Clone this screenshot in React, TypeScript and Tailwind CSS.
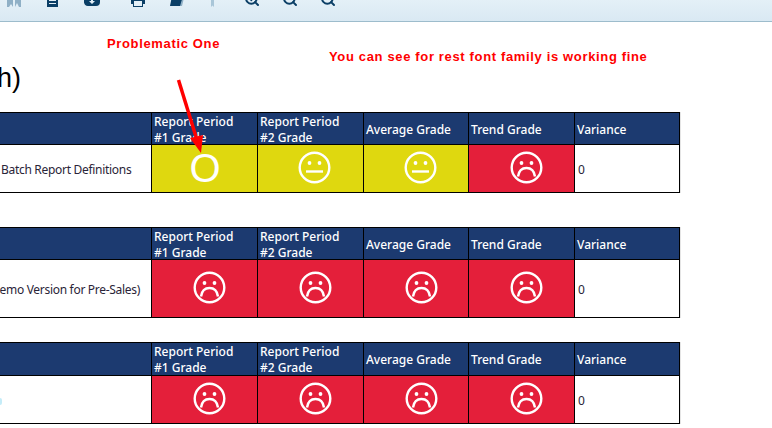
import { Search, ZoomIn, ZoomOut } from "lucide-react";

const columns = ["Report Period #1 Grade", "Report Period #2 Grade", "Average Grade", "Trend Grade", "Variance"];

type Grade = "sad" | "neutral" | "broken";

const tables: {
  name: string;
  nameClass: string;
  grades: Grade[];
  bodyHeight: string;
  headHeight: string;
  margin: string;
  dot?: boolean;
}[] = [
  {
    name: "Batch Report Definitions",
    nameClass: "justify-start pl-[1px]",
    grades: ["broken", "neutral", "neutral", "sad"],
    bodyHeight: "h-[48px]",
    headHeight: "h-[32px]",
    margin: "mt-0",
  },
  {
    name: "(Demo Version for Pre-Sales)",
    nameClass: "justify-end pr-[11px]",
    grades: ["sad", "sad", "sad", "sad"],
    bodyHeight: "h-[58px]",
    headHeight: "h-[32px]",
    margin: "mt-[34px]",
  },
  {
    name: "",
    nameClass: "justify-start",
    grades: ["sad", "sad", "sad", "sad"],
    bodyHeight: "h-[48px]",
    headHeight: "h-[33px]",
    margin: "mt-[24px]",
    dot: true,
  },
];

function Face({ mood }: { mood: "sad" | "neutral" }) {
  return (
    <svg width="33" height="33" viewBox="0 0 33 33" fill="none" stroke="white" strokeWidth="2.4">
      <circle cx="16.5" cy="16.5" r="14.8" />
      <circle cx="11.5" cy="12" r="1.9" fill="white" stroke="none" />
      <circle cx="21.5" cy="12" r="1.9" fill="white" stroke="none" />
      {mood === "sad" ? (
        <path d="M8 25.500c.8-5.500 4.200-8.500 8.500-8.500s7.700 3 8.500 8.500" />
      ) : (
        <path d="M8 20.500h17" />
      )}
    </svg>
  );
}

function GradeCell({ grade }: { grade: Grade }) {
  if (grade === "broken") {
    return (
      <div className="flex items-center justify-center border-l border-black bg-[#dfd80f] pb-[2px] pl-[1px] font-['Liberation_Sans',sans-serif] text-[40px] leading-none text-white">
        O
      </div>
    );
  }

  return (
    <div
      className={`flex items-center justify-center border-l border-black pb-[3px] ${
        grade === "sad" ? "bg-[#e41f3a] pl-[10px]" : "bg-[#dfd80f] pl-[8px]"
      }`}
    >
      <Face mood={grade} />
    </div>
  );
}

function Toolbar() {
  return (
    <div className="flex h-[22px] items-start overflow-hidden border-b border-[#9dbccc] bg-gradient-to-b from-[#e4f0f7] to-[#d9e9f3] text-[#0b3f66]">
      <svg className="-mt-[9px] ml-[6px] shrink-0 text-[#8fb0c6]" width="16" height="16" viewBox="0 0 16 16" fill="currentColor">
        <path d="M1 0h6v16l-2-3-2 3H1zM9 0h6v16h-2l-2-4-2 4z" />
      </svg>
      <svg className="-mt-[9px] ml-[23px] shrink-0" width="16" height="16" viewBox="0 0 16 16" fill="currentColor">
        <path d="M2 0h11v16H2z" />
        <path d="M4 9h7v1H4zM4 12h7v1H4z" fill="#e4f0f7" />
      </svg>
      <svg className="-mt-[9px] ml-[23px] shrink-0" width="16" height="16" viewBox="0 0 16 16" fill="currentColor">
        <path d="M4 6h8a4 4 0 0 1 4 5 4 4 0 0 1-4 4H4a4 4 0 0 1-4-4.500A4 4 0 0 1 4 6z" />
        <path d="M7 8h2v2h2l-3 3-3-3h2z" fill="#e4f0f7" />
      </svg>
      <svg className="-mt-[9px] ml-[30px] shrink-0" width="16" height="16" viewBox="0 0 16 16" fill="currentColor">
        <path d="M3 4h10v4h2v5h-2v3H3v-3H1V8h2z" />
        <path d="M4 10h8v5H4z" fill="#e4f0f7" />
      </svg>
      <svg className="-mt-[9px] ml-[23px] shrink-0" width="16" height="16" viewBox="0 0 16 16">
        <path d="M4 0h11l-3 15H1z" fill="currentColor" />
        <path d="M14 5h1.500l-2.500 10h-2z" fill="#8fb0c6" />
      </svg>
      <svg className="-mt-[9px] ml-[20px] shrink-0 text-[#a9c6d8]" width="16" height="16" viewBox="0 0 16 16" fill="currentColor">
        <path d="M6 0h3v16l-1.500-1.500L6 16z" />
      </svg>
      <ZoomIn className="-mt-[9px] ml-[23px] shrink-0" size={16} strokeWidth={3} />
      <ZoomOut className="-mt-[9px] ml-[22px] shrink-0" size={16} strokeWidth={3} />
      <Search className="-mt-[9px] ml-[22px] shrink-0" size={16} strokeWidth={3} />
    </div>
  );
}

export default function App() {
  return (
    <div className="relative h-[428px] w-[772px] overflow-hidden bg-white">
      <Toolbar />

      <h1 className="-ml-[3px] flex h-[90px] items-end pb-[19px] font-['Liberation_Sans',sans-serif] text-[27px] leading-[30px] font-normal text-black">
        h)
      </h1>

      {tables.map((table, index) => (
        <div
          className={`w-[680px] border-t border-r border-black font-['Noto_Sans',sans-serif] text-[12px] shadow-[1px_0_0_#e5e5e5] ${table.margin}`}
          key={index}
        >
          <div
            className={`grid grid-cols-[151px_106px_106px_105px_106px_105px] border-b border-black bg-[#1c3a70] font-medium text-white ${table.headHeight}`}
          >
            <div />
            {columns.map((column) => (
              <div
                className="flex items-center border-l border-black pt-[1px] pl-[2px] leading-[16px]"
                key={column}
              >
                <span className={column.startsWith("Report") ? "w-[90px]" : ""}>{column}</span>
              </div>
            ))}
          </div>

          <div
            className={`grid grid-cols-[151px_106px_106px_105px_106px_105px] border-b border-black text-[#2a2438] ${table.bodyHeight}`}
          >
            <div className={`flex items-center overflow-hidden pt-[3px] tracking-[-0.3px] whitespace-nowrap ${table.nameClass}`}>
              {table.dot ? <span className="-ml-[2px] h-[7px] w-[4px] rounded-full bg-[#c5ecf8]" /> : table.name}
            </div>
            {table.grades.map((grade, gradeIndex) => (
              <GradeCell grade={grade} key={gradeIndex} />
            ))}
            <div className="flex items-center border-l border-black pt-[3px] pl-[3px]">0</div>
          </div>
        </div>
      ))}

      <p className="absolute top-[36px] left-[107px] font-['Liberation_Sans',sans-serif] text-[13px] leading-[15px] font-bold tracking-[0.65px] text-[#ff0000]">
        Problematic One
      </p>
      <p className="absolute top-[49px] left-[329px] font-['Liberation_Sans',sans-serif] text-[13px] leading-[15px] font-bold tracking-[0.65px] text-[#ff0000]">
        You can see for rest font family is working fine
      </p>

      <svg className="absolute top-[78px] left-[170px]" width="40" height="80" viewBox="0 0 40 80" fill="none">
        <path d="M8.500 2 27 62" stroke="#ff0000" strokeWidth="3.500" />
        <path d="M31 75 20 60l13-3z" fill="#ff0000" />
      </svg>
    </div>
  );
}
